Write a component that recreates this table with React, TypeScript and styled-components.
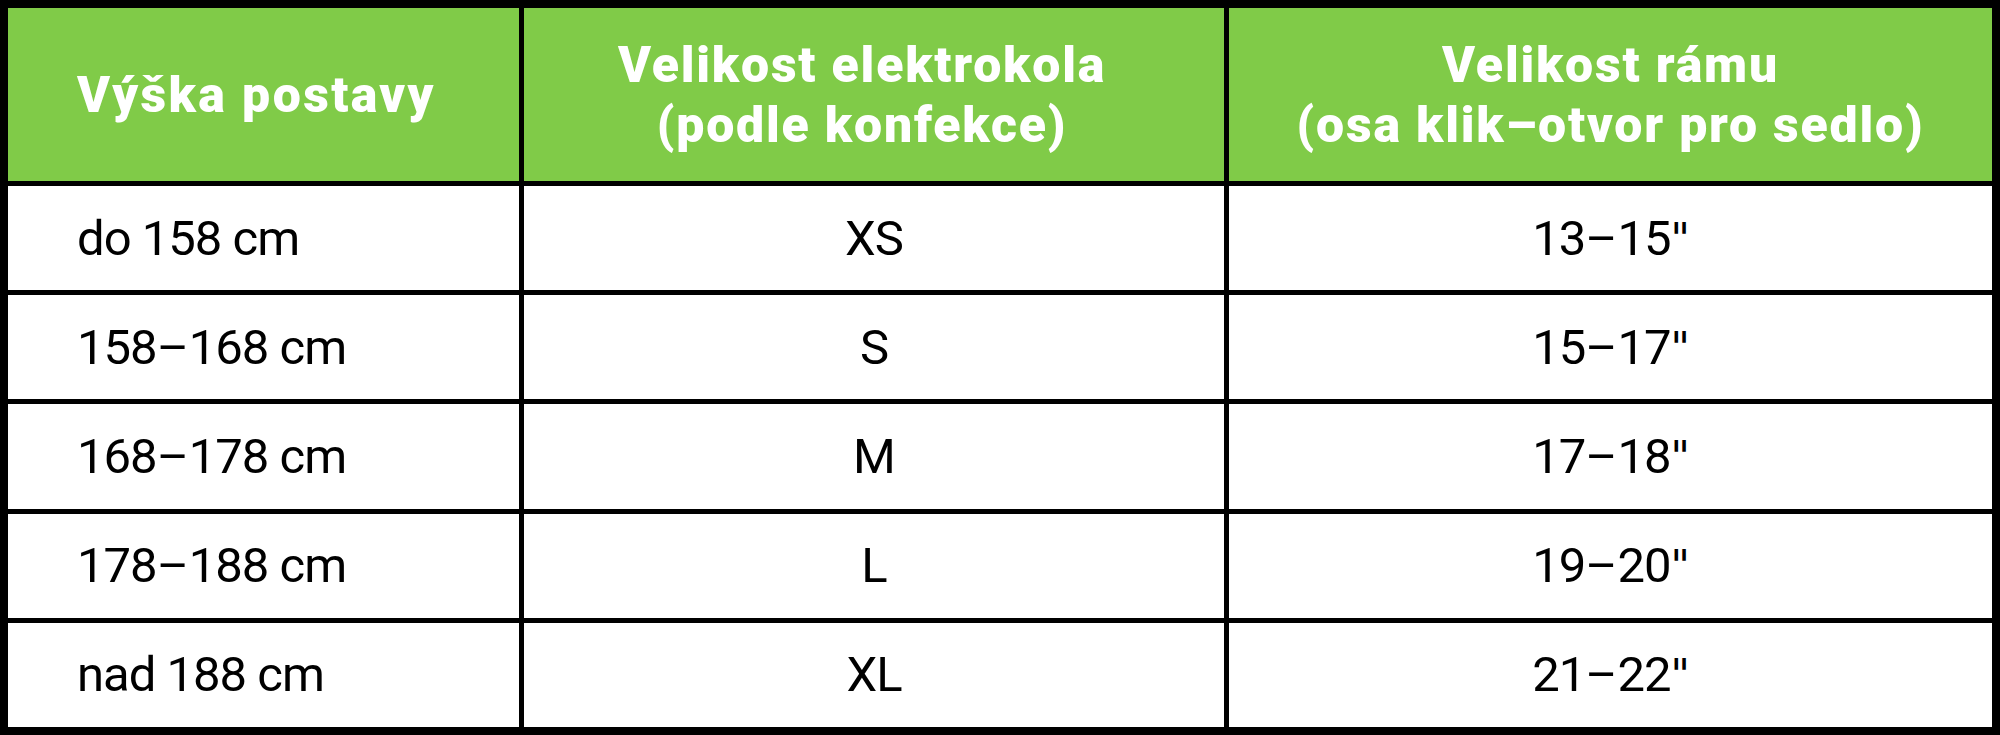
import { Fragment } from "react";
import styled, { createGlobalStyle } from "styled-components";

const GlobalStyle = createGlobalStyle`
  html, body {
    margin: 0;
    padding: 0;
    background: #ffffff;
  }
`;

const Table = styled.div`
  box-sizing: border-box;
  width: 2000px;
  height: 735px;
  padding: 8px;
  display: grid;
  grid-template-columns: 511px 700px 1fr;
  grid-template-rows: 173px repeat(5, 1fr);
  gap: 5px;
  background-color: #000000;
`;

const HeaderCell = styled.div<{ $align?: "left" | "center"; $shift?: number }>`
  display: flex;
  align-items: center;
  justify-content: ${(p) => (p.$align === "left" ? "flex-start" : "center")};
  text-align: ${(p) => p.$align ?? "center"};
  padding: ${(p) => (p.$align === "left" ? "0 0 0 69px" : `0 ${p.$shift ?? 0}px 0 0`)};
  background-color: #80cb48;
  color: #ffffff;
  font-family: Roboto, "Liberation Sans", sans-serif;
  font-weight: 900;
  font-size: 50px;
  line-height: 60px;
  letter-spacing: ${(p) => (p.$align === "left" ? "2.4px" : "1.8px")};
`;

const Cell = styled.div<{ $align?: "left" | "center" }>`
  display: flex;
  align-items: center;
  justify-content: ${(p) => (p.$align === "left" ? "flex-start" : "center")};
  padding: ${(p) => (p.$align === "left" ? "0 0 0 69px" : "0")};
  background-color: #ffffff;
  color: #000000;
  font-family: Roboto, "Liberation Sans", sans-serif;
  font-weight: 400;
  font-size: 49px;
  letter-spacing: -1px;
`;

const Dash = styled.span`
  letter-spacing: -3px;
  margin-right: 3px;
`;

const Inch = styled.span`
  font-family: "DejaVu Sans", sans-serif;
  font-size: 42px;
  margin-left: 0;
`;

const rows = [
  { height: ["do 158 cm"], size: "XS", frame: ["13", "15"] },
  { height: ["158", "168 cm"], size: "S", frame: ["15", "17"] },
  { height: ["168", "178 cm"], size: "M", frame: ["17", "18"] },
  { height: ["178", "188 cm"], size: "L", frame: ["19", "20"] },
  { height: ["nad 188 cm"], size: "XL", frame: ["21", "22"] },
];

const Range = ({ parts }: { parts: string[] }) => (
  <span>
    {parts[0]}
    {parts.length > 1 && (
      <>
        <Dash>–</Dash>
        {parts[1]}
      </>
    )}
  </span>
);

const App = () => {
  return (
    <>
      <GlobalStyle />
      <Table>
        <HeaderCell $align="left">Výška postavy</HeaderCell>
        <HeaderCell $shift={24}>
          Velikost elektrokola
          <br />
          (podle konfekce)
        </HeaderCell>
        <HeaderCell>
          Velikost rámu
          <br />
          (osa klik–otvor pro sedlo)
        </HeaderCell>
        {rows.map((row) => (
          <Fragment key={row.height.join("-")}>
            <Cell $align="left">
              <Range parts={row.height} />
            </Cell>
            <Cell>{row.size}</Cell>
            <Cell>
              <Range parts={row.frame} />
              <Inch>"</Inch>
            </Cell>
          </Fragment>
        ))}
      </Table>
    </>
  );
};

export default App;
